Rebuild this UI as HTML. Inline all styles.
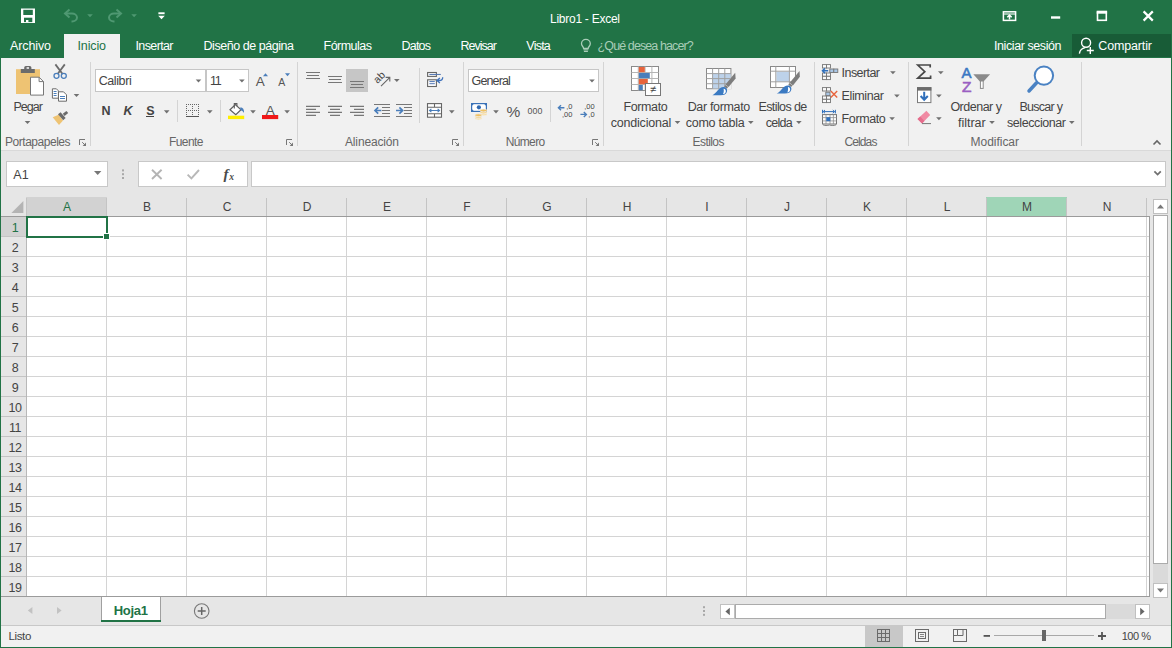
<!DOCTYPE html>
<html lang="es">
<head>
<meta charset="utf-8">
<title>Libro1 - Excel</title>
<style>
*{box-sizing:border-box;margin:0;padding:0}
html,body{width:1172px;height:648px;overflow:hidden;background:#e6e6e6}
body{position:relative;font-family:"Liberation Sans",sans-serif;font-size:12px;color:#444}
.abs,.t{position:absolute}
.t{white-space:nowrap;line-height:16px;height:16px}
svg{position:absolute;overflow:visible}
.w{color:#fff}
.g{color:#666}
.box{position:absolute;background:#fff;border:1px solid #c6c6c6}
.ch{position:absolute;top:198px;width:80px;height:18px;line-height:18px;text-align:center;font-size:12px;color:#444}
.rh{position:absolute;left:2px;width:25px;height:20px;line-height:20px;margin-top:1px;text-align:center;font-size:12.5px;letter-spacing:-0.4px;padding-left:1px;color:#444}

</style>
</head>
<body>
<div class="abs" style="left:0px;top:0px;width:1172px;height:58px;background:#217346;"></div>
<div class="abs" style="left:64px;top:34px;width:56px;height:24px;background:#f1f1f1;"></div>
<div class="abs" style="left:1072px;top:34px;width:99px;height:23px;background:#185c37;"></div>
<div class="abs" style="left:1px;top:58px;width:1170px;height:92px;background:#f1f1f1;"></div>
<div class="abs" style="left:1px;top:150px;width:1170px;height:1px;background:#d9d9d9;"></div>
<div class="abs" style="left:1px;top:151px;width:1170px;height:46px;background:#e6e6e6;"></div>
<div class="t w" style="left:550.0px;top:11.0px;font-size:12px;letter-spacing:-0.26px;">Libro1 - Excel</div>
<div class="t w" style="left:10.0px;top:38.0px;font-size:12.5px;letter-spacing:-0.11px;">Archivo</div>
<div class="t" style="left:77.5px;top:38.0px;font-size:12.5px;letter-spacing:-0.14px;color:#217346;">Inicio</div>
<div class="t w" style="left:135.5px;top:38.0px;font-size:12.5px;letter-spacing:-0.62px;">Insertar</div>
<div class="t w" style="left:203.5px;top:38.0px;font-size:12.5px;letter-spacing:-0.45px;">Diseño de página</div>
<div class="t w" style="left:323.5px;top:38.0px;font-size:12.5px;letter-spacing:-0.51px;">Fórmulas</div>
<div class="t w" style="left:401.5px;top:38.0px;font-size:12.5px;letter-spacing:-0.79px;">Datos</div>
<div class="t w" style="left:460.5px;top:38.0px;font-size:12.5px;letter-spacing:-0.98px;">Revisar</div>
<div class="t w" style="left:526.3px;top:38.0px;font-size:12.5px;letter-spacing:-0.77px;">Vista</div>
<div class="t" style="left:597.6px;top:38.0px;font-size:12.5px;letter-spacing:-0.90px;color:#a9cdb8;">¿Qué desea hacer?</div>
<div class="t w" style="left:994.0px;top:38.0px;font-size:12.5px;letter-spacing:-0.42px;">Iniciar sesión</div>
<div class="t w" style="left:1098.3px;top:38.0px;font-size:12.5px;letter-spacing:-0.15px;">Compartir</div>
<div class="abs" style="left:90px;top:62px;width:1px;height:84px;background:#d4d4d4;"></div>
<div class="abs" style="left:297px;top:62px;width:1px;height:84px;background:#d4d4d4;"></div>
<div class="abs" style="left:463px;top:62px;width:1px;height:84px;background:#d4d4d4;"></div>
<div class="abs" style="left:603px;top:62px;width:1px;height:84px;background:#d4d4d4;"></div>
<div class="abs" style="left:814px;top:62px;width:1px;height:84px;background:#d4d4d4;"></div>
<div class="abs" style="left:908px;top:62px;width:1px;height:84px;background:#d4d4d4;"></div>
<div class="abs" style="left:1081px;top:62px;width:1px;height:84px;background:#d4d4d4;"></div>
<div class="abs" style="left:177px;top:100px;width:1px;height:22px;background:#d4d4d4;"></div>
<div class="abs" style="left:220px;top:100px;width:1px;height:22px;background:#d4d4d4;"></div>
<div class="abs" style="left:550px;top:100px;width:1px;height:22px;background:#d4d4d4;"></div>
<div class="abs" style="left:419px;top:68px;width:1px;height:55px;background:#d4d4d4;"></div>
<div class="box" style="left:95px;top:69px;width:111px;height:23px"></div>
<div class="box" style="left:206px;top:69px;width:43px;height:23px"></div>
<div class="box" style="left:468px;top:69px;width:131px;height:23px"></div>
<div class="abs" style="left:346px;top:69px;width:22px;height:23px;background:#c6c6c6;"></div>
<div class="t" style="left:5.0px;top:134.0px;font-size:12px;letter-spacing:-0.47px;color:#666;">Portapapeles</div>
<div class="t" style="left:169.0px;top:134.0px;font-size:12px;letter-spacing:-0.57px;color:#666;">Fuente</div>
<div class="t" style="left:345.0px;top:134.0px;font-size:12px;letter-spacing:-0.15px;color:#666;">Alineación</div>
<div class="t" style="left:505.7px;top:134.0px;font-size:12px;letter-spacing:-0.64px;color:#666;">Número</div>
<div class="t" style="left:692.5px;top:134.0px;font-size:12px;letter-spacing:-0.56px;color:#666;">Estilos</div>
<div class="t" style="left:844.4px;top:134.0px;font-size:12px;letter-spacing:-0.87px;color:#666;">Celdas</div>
<div class="t" style="left:970.5px;top:134.0px;font-size:12px;letter-spacing:-0.02px;color:#666;">Modificar</div>
<div class="t" style="left:13.4px;top:99.0px;font-size:12.5px;letter-spacing:-0.94px;color:#444;">Pegar</div>
<div class="t" style="left:98.7px;top:73.0px;font-size:12.5px;letter-spacing:-0.40px;color:#444;">Calibri</div>
<div class="t" style="left:209.9px;top:73.0px;font-size:12.5px;letter-spacing:-1.20px;color:#444;">11</div>
<div class="t" style="left:471.6px;top:73.0px;font-size:12.5px;letter-spacing:-0.88px;color:#444;">General</div>
<div class="t" style="left:101.6px;top:103.0px;font-size:12.5px;color:#444;font-weight:bold;">N</div>
<div class="t" style="left:123.6px;top:103.0px;font-size:12.5px;color:#444;font-weight:bold;font-style:italic;">K</div>
<div class="t" style="left:146.3px;top:103.0px;font-size:12.5px;color:#444;font-weight:bold;">S</div>
<div class="abs" style="left:146px;top:116px;width:8px;height:1px;background:#444;"></div>
<div class="t" style="left:623.5px;top:99.0px;font-size:12.5px;letter-spacing:-0.39px;color:#444;">Formato</div>
<div class="t" style="left:610.7px;top:115.0px;font-size:12.5px;letter-spacing:-0.19px;color:#444;">condicional</div>
<div class="t" style="left:687.7px;top:99.0px;font-size:12.5px;letter-spacing:-0.34px;color:#444;">Dar formato</div>
<div class="t" style="left:685.7px;top:115.0px;font-size:12.5px;letter-spacing:-0.24px;color:#444;">como tabla</div>
<div class="t" style="left:758.5px;top:99.0px;font-size:12.5px;letter-spacing:-0.61px;color:#444;">Estilos de</div>
<div class="t" style="left:765.8px;top:115.0px;font-size:12.5px;letter-spacing:-0.77px;color:#444;">celda</div>
<div class="t" style="left:841.6px;top:65.0px;font-size:12.5px;letter-spacing:-0.57px;color:#444;">Insertar</div>
<div class="t" style="left:841.6px;top:88.0px;font-size:12.5px;letter-spacing:-0.39px;color:#444;">Eliminar</div>
<div class="t" style="left:841.6px;top:111.0px;font-size:12.5px;letter-spacing:-0.39px;color:#444;">Formato</div>
<div class="t" style="left:950.4px;top:99.0px;font-size:12.5px;letter-spacing:-0.50px;color:#444;">Ordenar y</div>
<div class="t" style="left:958.0px;top:115.0px;font-size:12.5px;letter-spacing:-0.01px;color:#444;">filtrar</div>
<div class="t" style="left:1019.5px;top:99.0px;font-size:12.5px;letter-spacing:-0.73px;color:#444;">Buscar y</div>
<div class="t" style="left:1007.0px;top:115.0px;font-size:12.5px;letter-spacing:-0.42px;color:#444;">seleccionar</div>
<div class="box" style="left:6px;top:161px;width:102px;height:26px;border-color:#c8c8c8"></div>
<div class="box" style="left:138px;top:161px;width:110px;height:26px;border-color:#c8c8c8"></div>
<div class="box" style="left:251px;top:161px;width:915px;height:26px;border-color:#c8c8c8"></div>
<div class="t" style="left:13.3px;top:167.0px;font-size:12.5px;letter-spacing:0.21px;color:#444;">A1</div>
<div class="abs" style="left:1px;top:197px;width:1170px;height:400px;background:#e6e6e6;"></div>
<div class="abs" style="left:27px;top:217px;width:1123px;height:380px;background:#fff;"></div>
<div class="abs" style="left:26px;top:197px;width:81px;height:19px;background:#d2d2d2;"></div>
<div class="abs" style="left:986px;top:197px;width:81px;height:19px;background:#9fd5b7;"></div>
<div class="abs" style="left:1px;top:217px;width:25px;height:19px;background:#d2d2d2;"></div>
<div class="ch" style="left:27px;color:#217346">A</div>
<div class="ch" style="left:107px;color:#444">B</div>
<div class="ch" style="left:187px;color:#444">C</div>
<div class="ch" style="left:267px;color:#444">D</div>
<div class="ch" style="left:347px;color:#444">E</div>
<div class="ch" style="left:427px;color:#444">F</div>
<div class="ch" style="left:507px;color:#444">G</div>
<div class="ch" style="left:587px;color:#444">H</div>
<div class="ch" style="left:667px;color:#444">I</div>
<div class="ch" style="left:747px;color:#444">J</div>
<div class="ch" style="left:827px;color:#444">K</div>
<div class="ch" style="left:907px;color:#444">L</div>
<div class="ch" style="left:987px;color:#444">M</div>
<div class="ch" style="left:1067px;color:#444">N</div>
<div class="rh" style="top:217px;color:#217346">1</div>
<div class="rh" style="top:237px;color:#444">2</div>
<div class="rh" style="top:257px;color:#444">3</div>
<div class="rh" style="top:277px;color:#444">4</div>
<div class="rh" style="top:297px;color:#444">5</div>
<div class="rh" style="top:317px;color:#444">6</div>
<div class="rh" style="top:337px;color:#444">7</div>
<div class="rh" style="top:357px;color:#444">8</div>
<div class="rh" style="top:377px;color:#444">9</div>
<div class="rh" style="top:397px;color:#444">10</div>
<div class="rh" style="top:417px;color:#444">11</div>
<div class="rh" style="top:437px;color:#444">12</div>
<div class="rh" style="top:457px;color:#444">13</div>
<div class="rh" style="top:477px;color:#444">14</div>
<div class="rh" style="top:497px;color:#444">15</div>
<div class="rh" style="top:517px;color:#444">16</div>
<div class="rh" style="top:537px;color:#444">17</div>
<div class="rh" style="top:557px;color:#444">18</div>
<div class="rh" style="top:577px;color:#444">19</div>
<div class="abs" style="left:1153px;top:199px;width:15px;height:15px;background:#fff;border:1px solid #c0c0c0"></div>
<div class="abs" style="left:1153px;top:215px;width:15px;height:349px;background:#fff;border:1px solid #ababab"></div>
<div class="abs" style="left:1153px;top:564px;width:15px;height:19px;background:#dadada;"></div>
<div class="abs" style="left:1153px;top:583px;width:15px;height:15px;background:#fff;border:1px solid #c0c0c0"></div>
<div class="abs" style="left:101px;top:597px;width:60px;height:25px;background:#fff;"></div>
<div class="abs" style="left:101px;top:620px;width:60px;height:2px;background:#217346;"></div>
<div class="abs" style="left:101px;top:597px;width:1px;height:23px;background:#a0a0a0;"></div>
<div class="abs" style="left:160px;top:597px;width:1px;height:23px;background:#a0a0a0;"></div>
<div class="t" style="left:113.7px;top:602.5px;font-size:13px;letter-spacing:-0.30px;color:#217346;font-weight:bold;">Hoja1</div>
<div class="abs" style="left:720px;top:604px;width:15px;height:15px;background:#fff;border:1px solid #c0c0c0"></div>
<div class="abs" style="left:735px;top:604px;width:371px;height:15px;background:#fff;border:1px solid #ababab"></div>
<div class="abs" style="left:1106px;top:604px;width:29px;height:15px;background:#dadada;"></div>
<div class="abs" style="left:1135px;top:604px;width:15px;height:15px;background:#fff;border:1px solid #c0c0c0"></div>
<div class="abs" style="left:1px;top:625px;width:1170px;height:1px;background:#c8c8c8;"></div>
<div class="abs" style="left:1px;top:626px;width:1170px;height:21px;background:#f1f1f1;"></div>
<div class="abs" style="left:865px;top:626px;width:38px;height:21px;background:#c8c8c8;"></div>
<div class="t" style="left:8.6px;top:628.0px;font-size:11.5px;letter-spacing:-0.40px;color:#444;">Listo</div>
<div class="t" style="left:1121.7px;top:628.0px;font-size:11px;letter-spacing:-0.45px;color:#444;">100 %</div>
<div class="abs" style="left:0px;top:0px;width:1px;height:648px;background:#217346;"></div>
<div class="abs" style="left:1171px;top:0px;width:1px;height:648px;background:#217346;"></div>
<div class="abs" style="left:0px;top:647px;width:1172px;height:1px;background:#217346;"></div>
<svg width="1172" height="648" viewBox="0 0 1172 648" style="left:0;top:0" font-family="Liberation Sans, sans-serif">
<path d="M24.7,121h5.6l-2.8,3.1z" fill="#707070"/>
<path d="M73.7,94h5.6l-2.8,3.1z" fill="#707070"/>
<path d="M195.7,79.5h5.6l-2.8,3.1z" fill="#707070"/>
<path d="M239.1,79.5h5.6l-2.8,3.1z" fill="#707070"/>
<path d="M163.89999999999998,110.3h5.6l-2.8,3.1z" fill="#707070"/>
<path d="M207.0,110.3h5.6l-2.8,3.1z" fill="#707070"/>
<path d="M250.2,110.3h5.6l-2.8,3.1z" fill="#707070"/>
<path d="M284.3,110.3h5.6l-2.8,3.1z" fill="#707070"/>
<path d="M394.0,79h5.6l-2.8,3.1z" fill="#707070"/>
<path d="M449.0,110.3h5.6l-2.8,3.1z" fill="#707070"/>
<path d="M493.2,110.3h5.6l-2.8,3.1z" fill="#707070"/>
<path d="M589.2,79.5h5.6l-2.8,3.1z" fill="#707070"/>
<path d="M674.7,121h5.6l-2.8,3.1z" fill="#707070"/>
<path d="M748.0,121h5.6l-2.8,3.1z" fill="#707070"/>
<path d="M796.1,121h5.6l-2.8,3.1z" fill="#707070"/>
<path d="M890.1,71.2h5.6l-2.8,3.1z" fill="#707070"/>
<path d="M894.1,94.4h5.6l-2.8,3.1z" fill="#707070"/>
<path d="M889.3000000000001,117.2h5.6l-2.8,3.1z" fill="#707070"/>
<path d="M938.0,71.2h5.6l-2.8,3.1z" fill="#707070"/>
<path d="M936.1,94.4h5.6l-2.8,3.1z" fill="#707070"/>
<path d="M936.1,117.2h5.6l-2.8,3.1z" fill="#707070"/>
<path d="M989.2,121h5.6l-2.8,3.1z" fill="#707070"/>
<path d="M1069.0,121h5.6l-2.8,3.1z" fill="#707070"/>
<path d="M79.5,145v-5.5h5.5" fill="none" stroke="#777" stroke-width="1"/><path d="M82.2,142.2l3,3" fill="none" stroke="#777" stroke-width="1"/><path d="M86,142.6v3.4h-3.4z" fill="#777"/>
<path d="M286.5,145v-5.5h5.5" fill="none" stroke="#777" stroke-width="1"/><path d="M289.2,142.2l3,3" fill="none" stroke="#777" stroke-width="1"/><path d="M293,142.6v3.4h-3.4z" fill="#777"/>
<path d="M452.5,145v-5.5h5.5" fill="none" stroke="#777" stroke-width="1"/><path d="M455.2,142.2l3,3" fill="none" stroke="#777" stroke-width="1"/><path d="M459,142.6v3.4h-3.4z" fill="#777"/>
<path d="M592.5,145v-5.5h5.5" fill="none" stroke="#777" stroke-width="1"/><path d="M595.2,142.2l3,3" fill="none" stroke="#777" stroke-width="1"/><path d="M599,142.6v3.4h-3.4z" fill="#777"/>
<path d="M1153.5,144.5l3.5,-3.5l3.5,3.5" fill="none" stroke="#666" stroke-width="1.6"/>
<path d="M21,8.5h14v14.5h-14z" fill="#fff"/><rect x="23.3" y="9.8" width="9.5" height="5.2" fill="#217346"/><rect x="24" y="17.7" width="8.3" height="4.4" fill="#217346"/><rect x="26" y="20" width="2.4" height="2.2" fill="#fff"/>
<path d="M69.5,9.5l-4.5,4l4.5,4" fill="none" stroke="#4f9872" stroke-width="2"/><path d="M65.5,13.5h6.5a5,4 0 0 1 0,8h-0.5" fill="none" stroke="#4f9872" stroke-width="2"/>
<path d="M87.2,14.2h5.6l-2.8,3.1z" fill="#4f9872"/>
<path d="M116.5,9.5l4.5,4l-4.5,4" fill="none" stroke="#4f9872" stroke-width="2"/><path d="M120.5,13.5h-6.5a5,4 0 0 0 0,8h0.5" fill="none" stroke="#4f9872" stroke-width="2"/>
<path d="M131.29999999999998,14.2h5.6l-2.8,3.1z" fill="#4f9872"/>
<rect x="158.4" y="12.3" width="6.2" height="1.9" fill="#fff"/><path d="M158.2,15.7h6.6l-3.3,3.6z" fill="#fff"/>
<rect x="1003.4" y="11.8" width="12.2" height="8.6" fill="none" stroke="#fff" stroke-width="1.5"/><path d="M1003,14h13" stroke="#fff" stroke-width="1.1"/><path d="M1009.5,19.4v-4M1007.3,17.2l2.2,-2.2l2.2,2.2" fill="none" stroke="#fff" stroke-width="1.5"/>
<rect x="1051" y="16.3" width="9.2" height="2.4" fill="#fff"/>
<rect x="1097.5" y="12.2" width="8.8" height="8.1" fill="none" stroke="#fff" stroke-width="1.6"/><rect x="1096.7" y="10.7" width="10.4" height="3" fill="#fff"/>
<path d="M1143.6,11.4l9.2,9.2M1152.8,11.4l-9.2,9.2" stroke="#fff" stroke-width="2.2"/>
<path d="M583.6,48.4c0,-1.6 -2.1,-2.4 -2.1,-4.7a4.4,4.3 0 0 1 8.8,0c0,2.3 -2.1,3.1 -2.1,4.7z" fill="none" stroke="#a9cdb8" stroke-width="1.3"/><path d="M583.4,49.8h5M583.9,51.4h4" stroke="#a9cdb8" stroke-width="1.1"/>
<circle cx="1086.1" cy="42.8" r="4.5" fill="none" stroke="#fff" stroke-width="1.4"/><path d="M1079.4,53.6c0.5,-3.6 2.6,-5.4 5.8,-6" fill="none" stroke="#fff" stroke-width="1.4"/><path d="M1090.3,47v7M1086.8,50.5h7" stroke="#fff" stroke-width="1.4"/>
<rect x="16" y="69.2" width="24" height="24.8" fill="#eec373"/>
<path d="M20.8,73v-4h3.4v-1.4a1.6,1.6 0 0 1 1.6,-1.6h4a1.6,1.6 0 0 1 1.6,1.6v1.4h3.4v4z" fill="#6b6b6b"/><rect x="26.6" y="67.2" width="2.4" height="1.6" fill="#f1f1f1"/>
<path d="M30.5,77.2h8.6l4.4,4.4v13.5h-13z" fill="#fff" stroke="#777" stroke-width="1"/><path d="M39.1,77.2v4.4h4.4" fill="none" stroke="#777" stroke-width="1"/>
<path d="M55.4,64.4l7.2,9.6M64.8,64.4l-7.2,9.6" stroke="#6b6b6b" stroke-width="1.8" fill="none"/><circle cx="56.5" cy="75.8" r="2.5" fill="none" stroke="#4a7ebb" stroke-width="1.3"/><circle cx="63.8" cy="75.8" r="2.5" fill="none" stroke="#4a7ebb" stroke-width="1.3"/>
<path d="M52.4,88.8h4l2,2v7.4h-6z" fill="#fff" stroke="#6b6b6b" stroke-width="1"/><path d="M58.5,91.8h5l3,3v6.4h-8z" fill="#fff" stroke="#6b6b6b" stroke-width="1"/><path d="M53.6,91.5h3M53.6,93.5h3M53.6,95.5h3M60,96.5h5M60,98.5h5" stroke="#4a7ebb" stroke-width="1"/>
<path d="M52.7,117.2l5.9,-2.4l4.4,5.6l-4,4.6z" fill="#eec373"/><path d="M58,114.2l2.6,-2l5,5.8l-2.4,2.2z" fill="#6b6b6b"/><path d="M62.8,113.8l3.6,-2.9l1.8,2.2l-3.6,2.9z" fill="#6b6b6b"/>
<text x="260.2" y="85.7" fill="#555" text-anchor="middle" style="font-size:13.5px;" >A</text>
<path d="M263,76.2l2.5,-3l2.5,3z" fill="#4a7ebb"/>
<text x="281.8" y="85.7" fill="#555" text-anchor="middle" style="font-size:10.5px;" >A</text>
<path d="M285,73.2h5l-2.5,3z" fill="#4a7ebb"/>
<g shape-rendering="crispEdges" stroke="#666" stroke-width="1" fill="none"><path d="M186,104.5h13M186,110.5h13M186.5,104v12M192.5,104v12M198.5,104v12" stroke-dasharray="1,1"/><path d="M186,116.5h13" stroke="#555"/></g>
<path d="M235.4,104.6l5.6,5.2l-5.2,5l-5.8,-5z" fill="#fff" stroke="#5e5e5e" stroke-width="1.2"/><path d="M234.3,108.4v-4.8h2.6v2.6" fill="none" stroke="#5e5e5e" stroke-width="1.1"/><path d="M240.4,107.2c2.4,0.2 4,2.2 3.6,5.8c-0.8,-1.4 -2.2,-2.6 -3.8,-3z" fill="#4a7ebb"/><rect x="228" y="115.7" width="16.2" height="3.4" fill="#ffef00"/>
<text x="270.3" y="114.7" fill="#555" text-anchor="middle" style="font-size:13.5px;" >A</text>
<rect x="262" y="115" width="16.2" height="4.1" fill="#f01818"/>
<path d="M306.0,72.5h14M307.0,75.5h12M306.0,78.5h14" stroke="#777" stroke-width="1.1" fill="none"/>
<path d="M328.0,76.5h14M329.0,79.5h12M328.0,82.5h14" stroke="#777" stroke-width="1.1" fill="none"/>
<path d="M350.0,81.5h14M351.0,84.5h12M350.0,87.5h14" stroke="#777" stroke-width="1.1" fill="none"/>
<path d="M306,106.4h14M306,109.4h10M306,112.4h14M306,115.4h10" stroke="#777" stroke-width="1.1" fill="none"/>
<path d="M328.0,106.4h14M330.0,109.4h10M328.0,112.4h14M330.0,115.4h10" stroke="#777" stroke-width="1.1" fill="none"/>
<path d="M350,106.4h14M354,109.4h10M350,112.4h14M354,115.4h10" stroke="#777" stroke-width="1.1" fill="none"/>
<g transform="translate(377.6,84) rotate(-45)"><text x="0" y="0" fill="#444" style="font-size:10.5px">ab</text></g>
<path d="M381,86.2l8.6,-8.6M385.6,77.4h4.2v4.2" fill="none" stroke="#666" stroke-width="1.1"/>
<path d="M374,104.5h16M374,116.5h16M382,107.5h8M382,110.5h8M382,113.5h8" stroke="#777" stroke-width="1.1" fill="none"/><path d="M375,110.5h6.4M378.2,107.4l-3.2,3.1l3.2,3.1" fill="none" stroke="#4a7ebb" stroke-width="1.7"/>
<path d="M396,104.5h16M396,116.5h16M404,107.5h8M404,110.5h8M404,113.5h8" stroke="#777" stroke-width="1.1" fill="none"/><path d="M396,110.5h6.4M399.4,107.4l3.2,3.1l-3.2,3.1" fill="none" stroke="#4a7ebb" stroke-width="1.7"/>
<rect x="427.6" y="72.5" width="8.8" height="3.9" fill="#f8f8f8" stroke="#666" stroke-width="1.1"/><rect x="427.6" y="79.8" width="8.8" height="6.7" fill="#fff" stroke="#666" stroke-width="1.1"/><path d="M429.4,74.45h11.4M429.4,81.6h5.4M429.4,83.7h5.4" stroke="#4f74b3" stroke-width="1" fill="none"/><path d="M442.7,77.2c0,2.4 -1.2,3.3 -3.4,3.3h-2.2M439.9,78l-3,2.5l3,2.4" fill="none" stroke="#3f72bb" stroke-width="1.3"/>
<rect x="427.5" y="103.6" width="14" height="13.6" fill="#fff" stroke="#666" stroke-width="1.1"/><path d="M427.5,107.2h14M427.5,113.8h14M434.5,103.6v3.6M434.5,113.8v3.4" stroke="#666" stroke-width="1.1"/><path d="M429.6,110.5h9.8M431.4,108.8l-1.9,1.7l1.9,1.7M437.6,108.8l1.9,1.7l-1.9,1.7" fill="none" stroke="#4a7ebb" stroke-width="1.1"/>
<rect x="471.6" y="103.6" width="14.8" height="7.8" fill="#fff" stroke="#3a72b8" stroke-width="1.2"/><path d="M471.6,103.6h2.6l-2.6,2.6zM486.4,103.6h-2.6l2.6,2.6zM471.6,111.4h2.6l-2.6,-2.6z" fill="#3a72b8"/><circle cx="478.9" cy="107.3" r="2.1" fill="#2f68b0"/>
<g stroke="#f1f1f1" stroke-width="0.7"><ellipse cx="483.5" cy="114.4" rx="3.5" ry="1.4" fill="#f8dfa6"/><ellipse cx="483.5" cy="112.5" rx="3.5" ry="1.4" fill="#f5d592"/><ellipse cx="483.5" cy="110.5" rx="3.5" ry="1.4" fill="#efc062"/><ellipse cx="478.4" cy="118.6" rx="3.5" ry="1.4" fill="#f8dfa6"/><ellipse cx="478.4" cy="117" rx="3.5" ry="1.4" fill="#f5d592"/><ellipse cx="478.4" cy="115.2" rx="3.5" ry="1.4" fill="#efc062"/></g>
<text x="513.5" y="117" fill="#555" text-anchor="middle" style="font-size:15.5px;" >%</text>
<text x="535" y="114" fill="#555" text-anchor="middle" style="font-size:9.5px;" textLength="14.8" lengthAdjust="spacingAndGlyphs">000</text>
<path d="M558.4,107.7h6M561,105.2l-2.6,2.5l2.6,2.5" fill="none" stroke="#4a7ebb" stroke-width="1.4"/>
<text x="572.4" y="109.4" fill="#444" text-anchor="end" style="font-size:7.5px;" >,0</text>
<text x="572.4" y="116.8" fill="#444" text-anchor="end" style="font-size:7.5px;" >,00</text>
<text x="594.6" y="109.4" fill="#444" text-anchor="end" style="font-size:7.5px;" >,00</text>
<text x="594.6" y="116.8" fill="#444" text-anchor="end" style="font-size:7.5px;" >,0</text>
<path d="M580.4,114.4h6M583.8,111.9l2.6,2.5l-2.6,2.5" fill="none" stroke="#4a7ebb" stroke-width="1.4"/>
<rect x="631.5" y="66.5" width="27" height="24" fill="#fff" stroke="#8a8a8a" stroke-width="1"/><path d="M638.3,66.5v24M645.1,66.5v24M651.9,66.5v24M631.5,72.5h27M631.5,78.5h27M631.5,84.5h27" stroke="#b5b5b5" stroke-width="1"/>
<rect x="638.8" y="67" width="6" height="5.2" fill="#e8643c"/><rect x="638.8" y="73" width="11" height="5.2" fill="#4a7ebb"/><rect x="638.8" y="79" width="9" height="5.2" fill="#e8643c"/><rect x="638.8" y="85" width="4" height="5.2" fill="#4a7ebb"/>
<rect x="645.5" y="83.5" width="15" height="12" fill="#fff" stroke="#777" stroke-width="1"/>
<text x="653" y="93.4" fill="#444" text-anchor="middle" style="font-size:11px;" >≠</text>
<rect x="706.5" y="68.5" width="24.4" height="20.2" fill="#fff" stroke="#8a8a8a" stroke-width="1"/>
<rect x="712.6" y="73.6" width="18" height="14.8" fill="#bdd2ea"/>
<path d="M712.6,68.5v20.2M718.7,68.5v20.2M724.8,68.5v20.2M706.5,73.6h24.4M706.5,78.6h24.4M706.5,83.7h24.4" stroke="#a0a0a0" stroke-width="1" fill="none"/>
<path d="M722,89.6l9.6,-12.6v12.6z" fill="#f1f1f1"/>
<g transform="translate(735,73.3)"><path d="M0.2,-0.6l0.4,5.8l-7,8.6l-3.2,-2.6z" fill="#7d7d7d"/><path d="M-9.6,11.6l2.8,2.2l-1.4,1.6l-2.8,-2.2z" fill="#7d7d7d"/><path d="M-11.6,13.8c2.4,0 4.2,1.8 3.6,4.4c-0.6,2.8 -3,3.8 -6.4,3.8h-8.2c4.4,-2.2 6.4,-8.2 11,-8.2z" fill="#3b7ac2"/><path d="M-11.4,15.4c1.6,0.2 2.6,1.4 2.2,3c-0.3,1.4 -1.4,2.2 -2.8,2.4c0.8,-1.6 1,-3.4 0.6,-5.4z" fill="#fff"/></g>
<rect x="770.5" y="66.5" width="25" height="21" fill="#fff" stroke="#8a8a8a" stroke-width="1"/>
<rect x="776.4" y="71.8" width="12.6" height="9.6" fill="#bdd2ea"/>
<path d="M775.8,66.5v21M789.4,66.5v21M770.5,71.2h25M770.5,81.8h25" stroke="#a0a0a0" stroke-width="1" fill="none"/>
<path d="M786,88.6l10,-13v13z" fill="#f1f1f1"/>
<g transform="translate(799.3,71.6)"><path d="M0.2,-0.6l0.4,5.8l-7,8.6l-3.2,-2.6z" fill="#7d7d7d"/><path d="M-9.6,11.6l2.8,2.2l-1.4,1.6l-2.8,-2.2z" fill="#7d7d7d"/><path d="M-11.6,13.8c2.4,0 4.2,1.8 3.6,4.4c-0.6,2.8 -3,3.8 -6.4,3.8h-8.2c4.4,-2.2 6.4,-8.2 11,-8.2z" fill="#3b7ac2"/><path d="M-11.4,15.4c1.6,0.2 2.6,1.4 2.2,3c-0.3,1.4 -1.4,2.2 -2.8,2.4c0.8,-1.6 1,-3.4 0.6,-5.4z" fill="#fff"/></g>
<g fill="#fbfbfb" stroke="#767676" stroke-width="0.9"><rect x="822.5" y="64.6" width="4" height="3.4"/><rect x="826.5" y="64.6" width="4" height="3.4"/><rect x="822.5" y="73.0" width="4" height="3.3"/><rect x="826.5" y="73.0" width="4" height="3.3"/><rect x="822.5" y="76.3" width="4" height="3.3"/><rect x="826.5" y="76.3" width="4" height="3.3"/></g>
<g fill="#a9c6e6" stroke="#767676" stroke-width="0.9"><rect x="829.8" y="69" width="4" height="3.5"/><rect x="833.8" y="69" width="4" height="3.5"/></g>
<path d="M822.6,70.8h5.6M825,68.4l-2.5,2.4l2.5,2.4" fill="none" stroke="#2f6fbb" stroke-width="1.5"/>
<g fill="#fbfbfb" stroke="#767676" stroke-width="0.9"><rect x="822.5" y="87.6" width="4" height="3.4"/><rect x="826.5" y="87.6" width="4" height="3.4"/><rect x="822.5" y="96.0" width="4" height="3.3"/><rect x="826.5" y="96.0" width="4" height="3.3"/><rect x="822.5" y="99.3" width="4" height="3.3"/><rect x="826.5" y="99.3" width="4" height="3.3"/></g>
<rect x="825.8" y="92.2" width="4.2" height="3.4" fill="#a9c6e6" stroke="#767676" stroke-width="0.9"/>
<path d="M830.8,91l6.4,6.4M837.2,91l-6.4,6.4" stroke="#e8643c" stroke-width="1.4" fill="none"/>
<path d="M823.4,111.6h11M825,110l-1.8,1.6l1.8,1.6M832.8,110l1.8,1.6l-1.8,1.6" fill="none" stroke="#2f6fbb" stroke-width="1"/><path d="M822.5,109.8v3.6M835.4,109.8v3.6" stroke="#2f6fbb" stroke-width="1"/>
<rect x="822.5" y="114.6" width="14" height="9.4" fill="#fbfbfb" stroke="#767676" stroke-width="1"/><path d="M826,114.6v9.4M830,114.6v9.4M833.4,114.6v9.4M822.5,117.6h14M822.5,120.9h14" stroke="#909090" stroke-width="0.8" fill="none"/><rect x="826.3" y="117.2" width="4" height="4" fill="#2f6fbb"/><path d="M823,124.8c1.4,1 4.6,0.9 6.4,0.2c1.8,0.7 5.2,0.8 6.6,-0.2" fill="none" stroke="#767676" stroke-width="0.9"/>
<path d="M930.2,67.6v-2.6h-12.4l7,6.7l-7,6.5h12.8v-2.6" fill="none" stroke="#484848" stroke-width="1.7"/>
<rect x="917.5" y="87.6" width="13.4" height="15" fill="#fff" stroke="#7a7a7a" stroke-width="1"/><rect x="917" y="87.2" width="14.4" height="3.4" fill="#6a6a6a"/><path d="M924.2,91.8v7.6M920.6,96l3.6,3.8l3.6,-3.8" fill="none" stroke="#2f6fbb" stroke-width="2"/>
<path d="M917.5,118.9l8.9,-8.1l3.8,4.2l-8.2,8.6z" fill="#f08aa3"/><path d="M917.5,118.9l2.7,-2.5l4.2,4.6l-2.4,2.6z" fill="#e56d8d"/><path d="M922,123.6h9" stroke="#777" stroke-width="1"/>
<text x="966.4" y="77.9" fill="#3b78c3" text-anchor="middle" style="font-size:15px;" stroke="#3b78c3" stroke-width="0.55">A</text>
<text x="966.7" y="92.4" fill="#9a5fc2" text-anchor="middle" style="font-size:15.5px;" stroke="#9a5fc2" stroke-width="0.55">Z</text>
<path d="M973.3,74.2h16.8l-6.8,7.6h-3.2z" fill="#8a8a8a"/><rect x="980.4" y="81" width="2.8" height="7.4" fill="#fff" stroke="#8a8a8a" stroke-width="1"/>
<circle cx="1043.9" cy="75.6" r="9.2" fill="#fff" stroke="#4a82c3" stroke-width="2"/><path d="M1036.6,82.8l-7.6,8.2" stroke="#4a82c3" stroke-width="3.5" stroke-linecap="round"/>
<path d="M94,171h7.4l-3.7,4z" fill="#777"/>
<g fill="#a8a8a8"><rect x="122" y="169.4" width="2" height="2"/><rect x="122" y="173.2" width="2" height="2"/><rect x="122" y="177" width="2" height="2"/></g>
<path d="M152,169.8l9.6,9.2M161.6,169.8l-9.6,9.2" stroke="#b4b4b4" stroke-width="1.9" fill="none"/>
<path d="M187.6,174.6l3.8,3.8l7.6,-8.4" stroke="#b8b8b8" stroke-width="1.9" fill="none"/>
<text x="223.6" y="179" fill="#4a4a4a" text-anchor="start" style="font-size:15px;font-weight:bold;font-style:italic;" font-family="Liberation Serif, serif">f</text>
<text x="229.2" y="179.6" fill="#4a4a4a" text-anchor="start" style="font-size:9.5px;font-weight:bold;font-style:italic;" font-family="Liberation Serif, serif">x</text>
<path d="M1154.4,171.4l3.2,3.2l3.2,-3.2" fill="none" stroke="#707070" stroke-width="1.8"/>
<path d="M27,236.5H1149M27,256.5H1149M27,276.5H1149M27,296.5H1149M27,316.5H1149M27,336.5H1149M27,356.5H1149M27,376.5H1149M27,396.5H1149M27,416.5H1149M27,436.5H1149M27,456.5H1149M27,476.5H1149M27,496.5H1149M27,516.5H1149M27,536.5H1149M27,556.5H1149M27,576.5H1149M106.5,217V596M186.5,217V596M266.5,217V596M346.5,217V596M426.5,217V596M506.5,217V596M586.5,217V596M666.5,217V596M746.5,217V596M826.5,217V596M906.5,217V596M986.5,217V596M1066.5,217V596M1146.5,217V596" stroke="#d4d4d4" stroke-width="1" fill="none" shape-rendering="crispEdges"/>
<path d="M26.5,198V216M106.5,198V216M186.5,198V216M266.5,198V216M346.5,198V216M426.5,198V216M506.5,198V216M586.5,198V216M666.5,198V216M746.5,198V216M826.5,198V216M906.5,198V216M986.5,198V216M1066.5,198V216M1146.5,198V216" stroke="#c4c4c4" stroke-width="1" fill="none" shape-rendering="crispEdges"/>
<path d="M1,236.5H26M1,256.5H26M1,276.5H26M1,296.5H26M1,316.5H26M1,336.5H26M1,356.5H26M1,376.5H26M1,396.5H26M1,416.5H26M1,436.5H26M1,456.5H26M1,476.5H26M1,496.5H26M1,516.5H26M1,536.5H26M1,556.5H26M1,576.5H26" stroke="#c4c4c4" stroke-width="1" fill="none" shape-rendering="crispEdges"/>
<path d="M26.5,217V597" stroke="#b8b8b8" stroke-width="1" fill="none" shape-rendering="crispEdges"/><path d="M1,216.5H1150M1149.5,216V597M1,596.5H1150" stroke="#9b9b9b" stroke-width="1" fill="none" shape-rendering="crispEdges"/>
<path d="M23.4,201v12h-12z" fill="#b4b4b4"/>
<rect x="26.5" y="216.5" width="80.5" height="20.5" fill="none" stroke="#217346" stroke-width="2" shape-rendering="crispEdges"/><rect x="103.5" y="233.5" width="6" height="6" fill="#217346" stroke="#fff" stroke-width="1" shape-rendering="crispEdges"/>
<path d="M1157,208.4h7l-3.5,-4z" fill="#777"/><path d="M1157,588.6h7l-3.5,4z" fill="#777"/>
<path d="M32.4,607v7l-4.6,-3.5z" fill="#c2c2c2"/><path d="M57,607v7l4.6,-3.5z" fill="#c2c2c2"/>
<circle cx="201.7" cy="611" r="7.3" fill="none" stroke="#777" stroke-width="1.1"/><path d="M197.7,611h8M201.7,607v8" stroke="#666" stroke-width="1.5"/>
<g fill="#a8a8a8"><rect x="703" y="606.2" width="2" height="2"/><rect x="703" y="610" width="2" height="2"/><rect x="703" y="613.8" width="2" height="2"/></g>
<path d="M729.8,607.8v7.4l-4.4,-3.7z" fill="#666"/><path d="M1140.2,607.8v7.4l4.4,-3.7z" fill="#666"/>
<rect x="877.5" y="629.5" width="12" height="12" fill="none" stroke="#6a6a6a" stroke-width="1"/><path d="M881.5,629.5v12M885.5,629.5v12M877.5,633.5h12M877.5,637.5h12" stroke="#6a6a6a" stroke-width="1" fill="none"/>
<rect x="915.5" y="629.5" width="13" height="12" fill="none" stroke="#6a6a6a" stroke-width="1"/><rect x="918.5" y="632.5" width="7" height="6" fill="none" stroke="#6a6a6a" stroke-width="1"/><path d="M920,634.5h4M920,636.5h4" stroke="#6a6a6a" stroke-width="0.8"/>
<rect x="953.5" y="629.5" width="13" height="12" fill="none" stroke="#6a6a6a" stroke-width="1"/><path d="M957.5,629.5v6h5.5v-6M953.5,635.5h4" stroke="#6a6a6a" stroke-width="1" fill="none"/>
<rect x="983.6" y="635" width="6.4" height="1.8" fill="#555"/><path d="M994,635.5h100" stroke="#a8a8a8" stroke-width="1"/><rect x="1042" y="630" width="4" height="11" fill="#666"/><path d="M1098,636h8M1102,632v8" stroke="#555" stroke-width="1.8"/>
</svg>

</body>
</html>
